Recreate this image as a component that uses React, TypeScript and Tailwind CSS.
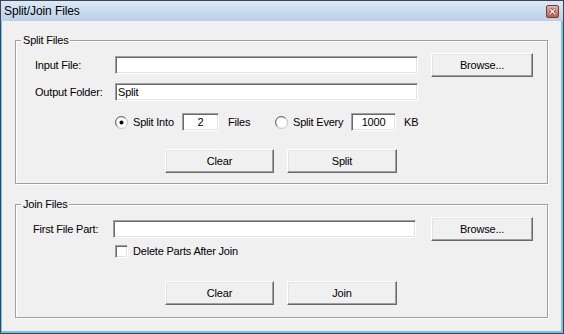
const font = { fontFamily: '"Liberation Sans", Arial, sans-serif' };

const Field = ({ value = "", className = "" }: { value?: string; className?: string }) => (
  <div
    className={`h-[18px] bg-white border border-t-[#a0a0a0] border-l-[#a0a0a0] border-b-white border-r-white shadow-[inset_1px_1px_0_#696969,inset_-1px_-1px_0_#e3e3e3] flex items-center text-[11px] leading-none text-black ${className}`}
  >
    {value}
  </div>
);

const Button = ({ label, className = "" }: { label: string; className?: string }) => (
  <div
    className={`h-[24px] bg-[#f0f0f0] border border-t-white border-l-white border-b-[#696969] border-r-[#696969] shadow-[inset_-1px_-1px_0_#a0a0a0,inset_1px_1px_0_#e3e3e3] flex items-center justify-center text-[11px] text-black ${className}`}
  >
    {label}
  </div>
);

const Radio = ({ checked }: { checked?: boolean }) => (
  <svg width="13" height="13" viewBox="0 0 13 13" className="shrink-0">
    <circle cx="6.5" cy="6.5" r="6" fill="#fff" stroke="#a0a0a0" />
    <path d="M2.3 10.2 A5 5 0 0 1 10.2 2.3" fill="none" stroke="#696969" />
    <path d="M10.7 2.8 A5.2 5.2 0 0 1 2.8 10.7" fill="none" stroke="#e3e3e3" />
    {checked && <circle cx="6.5" cy="6.5" r="2" fill="#000" />}
  </svg>
);

const Check = () => (
  <div className="w-[13px] h-[13px] shrink-0 bg-white border border-t-[#a0a0a0] border-l-[#a0a0a0] border-b-white border-r-white shadow-[inset_1px_1px_0_#696969,inset_-1px_-1px_0_#e3e3e3]" />
);

const Group = ({ title, children, className = "" }: { title: string; children: React.ReactNode; className?: string }) => (
  <div
    className={`relative w-[533px] border border-[#a0a0a0] shadow-[1px_1px_0_#fff,inset_1px_1px_0_#fff] ${className}`}
  >
    <span className="absolute left-[5px] -top-[7px] px-[2px] bg-[#f0f0f0] text-[11px] leading-[13px] text-black">
      {title}
    </span>
    {children}
  </div>
);

export default function App() {
  return (
    <div style={font} className="w-[564px] h-[334px] border border-[#3a4654] bg-[#f0f0f0] flex flex-col overflow-hidden">
      {/* title bar */}
      <div className="h-[20px] shrink-0 flex items-center justify-between pl-[3px] pr-[4px] bg-gradient-to-b from-[#dce8f5] to-[#bad0e9]">
        <span className="text-[12px] text-black tracking-[-0.1px]">Split/Join Files</span>
        <div className="w-[13px] h-[13px] rounded-[2px] border border-[#7b3b35] bg-gradient-to-b from-[#e8b3a8] to-[#c75a4b] flex items-center justify-center">
          <svg width="7" height="7" viewBox="0 0 7 7">
            <path d="M1 1 L6 6 M6 1 L1 6" stroke="#5a2a25" strokeWidth="2.6" strokeLinecap="square" />
            <path d="M1 1 L6 6 M6 1 L1 6" stroke="#fff" strokeWidth="1.4" strokeLinecap="square" />
          </svg>
        </div>
      </div>

      {/* body */}
      <div className="flex-1 border-l border-r-2 border-b-2 border-l-[#76c3ea] border-r-[#76c3ea] border-b-[#76c3ea] pl-[13px] pt-[19px] text-[11px] text-black tracking-[-0.2px]">
        <Group title="Split Files" className="pt-[12px] pb-[10px]">
          <div className="flex items-center h-[24px] pl-[19px]">
            <span className="w-[80px]">Input File:</span>
            <Field className="w-[303px]" />
            <Button label="Browse..." className="w-[102px] ml-[13px]" />
          </div>
          <div className="flex items-center mt-[6px] pl-[19px]">
            <span className="w-[80px]">Output Folder:</span>
            <Field value="Split" className="w-[303px] pl-[2px]" />
          </div>
          <div className="flex items-center h-[18px] mt-[12px] pl-[99px]">
            <Radio checked />
            <span className="ml-[5px] w-[49px]">Split Into</span>
            <Field value="2" className="w-[37px] justify-center" />
            <span className="ml-[9px] w-[47px]">Files</span>
            <Radio />
            <span className="ml-[5px] w-[58px]">Split Every</span>
            <Field value="1000" className="w-[45px] justify-center" />
            <span className="ml-[8px]">KB</span>
          </div>
          <div className="flex mt-[18px] pl-[149px] gap-[13px]">
            <Button label="Clear" className="w-[109px]" />
            <Button label="Split" className="w-[110px]" />
          </div>
        </Group>

        <Group title="Join Files" className="mt-[20px] pt-[12px] pb-[12px]">
          <div className="flex items-center h-[24px] pl-[17px]">
            <span className="w-[80px]">First File Part:</span>
            <Field className="w-[303px]" />
            <Button label="Browse..." className="w-[102px] ml-[15px]" />
          </div>
          <div className="flex items-center h-[13px] mt-[4px] pl-[99px]">
            <Check />
            <span className="ml-[5px] leading-[13px]">Delete Parts After Join</span>
          </div>
          <div className="flex mt-[23px] pl-[149px] gap-[13px]">
            <Button label="Clear" className="w-[109px]" />
            <Button label="Join" className="w-[110px]" />
          </div>
        </Group>
      </div>
    </div>
  );
}
